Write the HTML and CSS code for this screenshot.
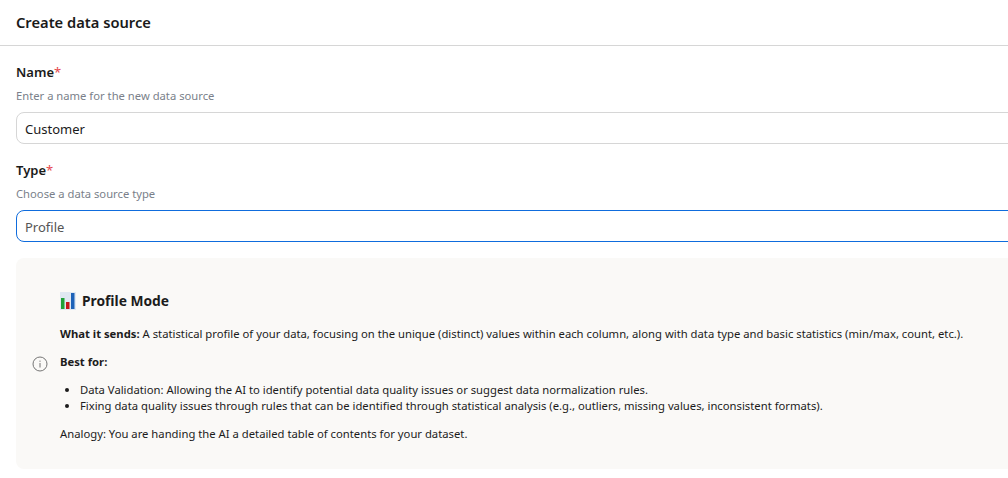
FILE: index.html
```html
<!DOCTYPE html>
<html lang="en">
<head>
  <meta charset="UTF-8" />
  <title>Create data source</title>
  <link rel="stylesheet" href="styles.css">
</head>
<body>
  <div class="page">
    <header class="page-header">
      <h1>Create data source</h1>
    </header>

    <form class="form">
      <div class="form-group">
        <label>Name<span class="required">*</span></label>
        <p class="hint">Enter a name for the new data source</p>
        <div class="input">Customer</div>
      </div>

      <div class="form-group">
        <label>Type<span class="required">*</span></label>
        <p class="hint">Choose a data source type</p>
        <div class="input select">Profile</div>
      </div>

      <div class="info-box">
        <svg class="info-icon" width="16" height="16" viewBox="0 0 16 16" fill="none">
          <circle cx="8" cy="8" r="7" stroke="#757575" stroke-width="1"/>
          <rect x="7.5" y="7" width="1" height="4.5" fill="#757575"/>
          <rect x="7.5" y="4.6" width="1" height="1.2" fill="#757575"/>
        </svg>
        <div class="info-body">
          <h2>
            <svg class="chart-icon" width="16" height="18" viewBox="0 0 16 18">
              <rect width="16" height="18" fill="#dfe8f2"/>
              <rect x="1" y="6" width="3.5" height="11" fill="#1fa038"/>
              <rect x="6" y="10" width="3.5" height="7" fill="#c4161c"/>
              <rect x="11" y="1" width="3.5" height="16" fill="#1d62b8"/>
            </svg>
            Profile Mode
          </h2>
          <p><strong>What it sends:</strong> A statistical profile of your data, focusing on the unique (distinct) values within each column, along with data type and basic statistics (min/max, count, etc.).</p>
          <p><strong>Best for:</strong></p>
          <ul>
            <li>Data Validation: Allowing the AI to identify potential data quality issues or suggest data normalization rules.</li>
            <li>Fixing data quality issues through rules that can be identified through statistical analysis (e.g., outliers, missing values, inconsistent formats).</li>
          </ul>
          <p>Analogy: You are handing the AI a detailed table of contents for your dataset.</p>
        </div>
      </div>
    </form>
  </div>
</body>
</html>
```

FILE: styles.css
```css
* {
  margin: 0;
  padding: 0;
  box-sizing: border-box;
}

html, body {
  height: 100%;
  overflow: hidden;
}

body {
  background: #fff;
  color: #1a1a1a;
  font-family: "Noto Sans", "Open Sans", sans-serif;
}

.page {
  width: 1040px;
}

.page-header {
  height: 46px;
  padding: 12px 16px 0;
  border-bottom: 1px solid #d6d6d6;
}

.page-header h1 {
  font-size: 14.7px;
  line-height: 20px;
  font-weight: 600;
}

.form {
  padding: 16px 16px 0;
}

.form-group {
  margin-bottom: 16px;
}

.form-group label {
  display: block;
  font-size: 13px;
  line-height: 20px;
  font-weight: 600;
}

.required {
  color: #e5484d;
  font-weight: 400;
}

.hint {
  margin-top: 6px;
  font-size: 11.24px;
  line-height: 16px;
  color: #7a7f8a;
}

.input {
  height: 32px;
  margin-top: 8px;
  padding: 0 8px;
  border: 1px solid #d6d6d6;
  border-radius: 8px;
  font-size: 13px;
  line-height: 32px;
}

.select {
  border-color: #0f6cdd;
  color: #555;
}

.info-box {
  display: flex;
  align-items: center;
  gap: 12px;
  height: 211px;
  padding: 0 16px;
  background: #faf9f7;
  border-radius: 8px;
}

.info-body {
  padding-top: 17px;
  font-size: 11.28px;
  line-height: 16px;
  color: #1c1c1c;
}

.info-body h2 {
  display: flex;
  align-items: center;
  gap: 6px;
  height: 22px;
  margin-bottom: 14px;
  font-size: 13.8px;
  font-weight: 700;
}

.info-body p {
  margin-bottom: 12px;
}

.info-body strong {
  font-weight: 700;
}

.info-body ul {
  margin-bottom: 12px;
  padding-left: 20px;
}
```
